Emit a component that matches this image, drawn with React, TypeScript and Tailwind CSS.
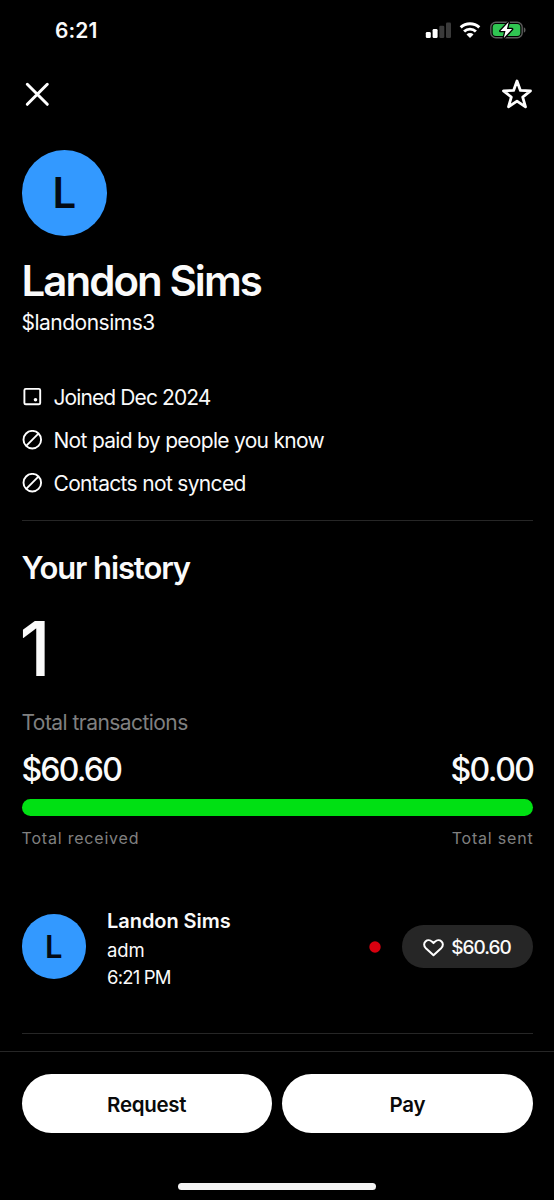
import type { ReactNode } from "react"
import { clsx } from "clsx"

const facts = [
    { id: "joined", icon: "calendar", label: "Joined Dec 2024", tracking: "tracking-[-0.9px]" },
    { id: "paid", icon: "none", label: "Not paid by people you know", tracking: "tracking-[-0.7px]" },
    { id: "contacts", icon: "none", label: "Contacts not synced", tracking: "tracking-[-0.67px]" },
]

function StatusBar() {
    return (
        <div className="flex h-[60px] items-center justify-between pl-[55px] pr-[28px] pt-px">
            <span className="pt-px text-[21px] font-semibold leading-[60px] tracking-[0.1px]">6:21</span>
            <div className="flex items-center pb-px">
                {/* Signal */}
                <svg width="26" height="16" viewBox="0 0 26 16">
                    <rect x="0.8" y="10" width="5" height="6" rx="1.3" fill="#fff" />
                    <rect x="7.6" y="7" width="5" height="9" rx="1.3" fill="#fff" />
                    <rect x="14.3" y="3.7" width="5" height="12.3" rx="1.3" fill="#3a3a3a" />
                    <rect x="21" y="0.4" width="5" height="15.6" rx="1.3" fill="#3a3a3a" />
                </svg>
                {/* Wifi */}
                <svg className="ml-2" width="22" height="16" viewBox="0 0 22 16" fill="none" stroke="#fff">
                    <path d="M1.7 5.4a13.5 13.5 0 0 1 18.6 0" strokeWidth="2.9" />
                    <path d="M5.1 9.5a8.5 8.5 0 0 1 11.8 0" strokeWidth="2.9" />
                    <path d="M11 16l-3.5-3.5a5 5 0 0 1 7 0z" fill="#fff" stroke="none" />
                </svg>
                {/* Battery, charging */}
                <svg className="ml-[9px]" width="36" height="18" viewBox="0 0 36 18">
                    <rect x="0.8" y="1.2" width="31.4" height="15.6" rx="5" fill="none" stroke="#5c5c5c" strokeWidth="1.4" />
                    <path d="M33.8 6.3c1.1.4 1.7 1.4 1.7 2.7s-.6 2.3-1.7 2.7z" fill="#5c5c5c" />
                    <rect x="2.7" y="3.1" width="27.6" height="11.8" rx="3.2" fill="#30c552" />
                    <path d="M18.7 1.1L10.4 10h5.1l-1.7 7 8.3-8.9h-5.2z" fill="#fff" stroke="#000" strokeWidth="2.6" strokeLinejoin="round" paintOrder="stroke" />
                </svg>
            </div>
        </div>
    )
}

function FactIcon({ name }: { name: string }) {
    if (name === "calendar") {
        return (
            <svg className="mb-0.5" width="22" height="22" viewBox="0 0 22 22" fill="none">
                <rect x="2.4" y="2.9" width="15.8" height="15.4" rx="1.4" stroke="#fff" strokeWidth="1.9" />
                <circle cx="13.5" cy="13.8" r="1.8" fill="#fff" />
            </svg>
        )
    }
    return (
        <svg width="22" height="22" viewBox="0 0 22 22" fill="none" stroke="#fff" strokeWidth="1.9">
            <circle cx="10.3" cy="9.7" r="8.8" />
            <path d="M4.2 15.8L16.4 3.6" />
        </svg>
    )
}

function Action({ children }: { children: ReactNode }) {
    return (
        <button className="h-[59px] flex-1 rounded-full bg-white pt-[3px] text-[20.5px] font-semibold tracking-[-0.3px] text-[#0a0a0a]">
            {children}
        </button>
    )
}

export default function App() {
    return (
        <div className="flex h-[1200px] w-[554px] flex-col overflow-hidden bg-black font-['Inter',sans-serif] text-[#fafafa]">
            <StatusBar />

            <header className="flex h-[68px] items-center justify-between pl-[25px] pr-[21px]">
                <svg width="25" height="25" viewBox="0 0 25 25" stroke="#fff" strokeWidth="3" strokeLinecap="round">
                    <path d="M2.3 2.3l20 20M22.3 2.3l-20 20" />
                </svg>
                <svg width="32" height="32" viewBox="0 0 32 32" fill="none" stroke="#fff" strokeWidth="2.8" strokeLinejoin="round">
                    <path d="M16 3L19.4 12.4L29.5 12.9L21.7 19.1L24.5 28.8L16 23.2L7.5 28.8L10.3 19.1L2.5 12.9L12.6 12.4Z" />
                </svg>
            </header>

            <main className="flex flex-1 flex-col px-[21.5px]">
                <div className="mt-[22px] flex size-[85.5px] items-center justify-center rounded-full bg-[#3399ff] text-[42px] font-semibold text-[#030a14]">L</div>
                <h1 className="mt-[20.5px] text-[42px] font-semibold leading-[50px] tracking-[-1.95px]">Landon Sims</h1>
                <p className="mt-px text-[21px] leading-8 tracking-[-0.5px]">$landonsims3</p>

                <ul className="mt-[37px]">
                    {facts.map((fact) => (
                        <li key={fact.id} className="flex h-[43px] items-center gap-[10px]">
                            <FactIcon name={fact.icon} />
                            <span className={clsx("pt-px text-[21px]", fact.tracking)}>{fact.label}</span>
                        </li>
                    ))}
                </ul>

                <hr className="mt-[15px] border-[#262626]" />

                <h2 className="mt-[27px] text-[31px] font-semibold leading-10 tracking-[-1.1px]">Your history</h2>
                <p className="-ml-0.5 mt-[16px] text-[75px] font-medium leading-[90px]">1</p>
                <p className="mt-[14px] text-[21px] leading-[30px] tracking-[-0.55px] text-[#808080]">Total transactions</p>

                <div className="mt-[12px] flex justify-between text-[32px] font-medium leading-10">
                    <span className="tracking-[-1.8px]">$60.60</span>
                    <span className="-mr-px tracking-[-1.5px]">$0.00</span>
                </div>
                <div className="mt-[9px] h-[16.5px] shrink-0 rounded-full bg-[#00e013]" />
                <div className="mt-[10.5px] flex justify-between text-[16px] leading-6 tracking-[0.8px] text-[#808080]">
                    <span>Total received</span>
                    <span className="-mr-px">Total sent</span>
                </div>

                <div className="mt-[52.5px] flex items-center">
                    <div className="flex size-[64.5px] shrink-0 items-center justify-center rounded-full bg-[#3399ff] pt-0.5 text-[31px] font-semibold text-[#030a14]">L</div>
                    <div className="ml-[21px] flex-1 pt-[3px]">
                        <p className="text-[20px] font-semibold leading-[31px] tracking-[-0.05px]">Landon Sims</p>
                        <p className="text-[18.5px] leading-[27px] tracking-[-0.1px]">adm</p>
                        <p className="text-[18.5px] leading-[27px] tracking-[-0.8px]">6:21 PM</p>
                    </div>
                    <svg className="mr-[20.5px] mt-px" width="12" height="12" viewBox="0 0 12 12">
                        <circle cx="6" cy="6" r="5.7" fill="#d8000f" />
                    </svg>
                    <div className="flex h-[43px] w-[131px] items-center justify-center gap-[7px] rounded-full bg-[#262626]">
                        <svg className="mt-0.5" width="21" height="18" viewBox="0 0 21 18" fill="none" stroke="#fff" strokeWidth="2" strokeLinejoin="round">
                            <path d="M10.5 16.3L2.6 8.9C.7 7 .7 4.1 2.5 2.4C4.3.7 7.1.8 8.9 2.6L10.5 4.1L12.1 2.6C13.9.8 16.7.7 18.5 2.4C20.3 4.1 20.3 7 18.4 8.9Z" />
                        </svg>
                        <span className="pt-[3px] text-[19px] font-medium tracking-[-1px]">$60.60</span>
                    </div>
                </div>

                <hr className="mt-auto mb-[17px] border-[#262626]" />
            </main>

            <footer className="flex h-[149px] shrink-0 flex-col items-center border-t border-[#262626]">
                <div className="mt-[22px] flex w-full gap-[10.5px] px-[21.5px]">
                    <Action>Request</Action>
                    <Action>Pay</Action>
                </div>
                <div className="mt-[49.5px] h-[7px] w-[198px] rounded-full bg-[#f4f4f4]" />
            </footer>
        </div>
    )
}
